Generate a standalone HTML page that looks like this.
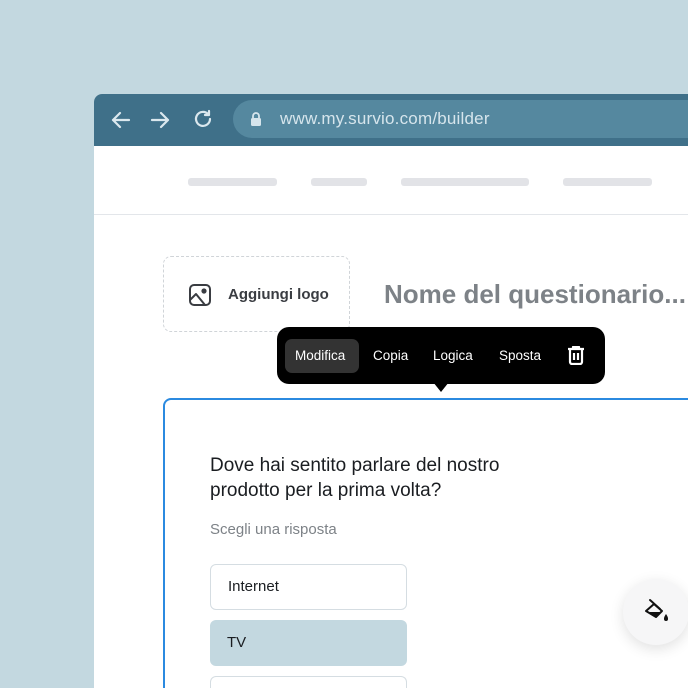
<!DOCTYPE html>
<html style="width:688px;height:688px;overflow:hidden"><head><style>
*{margin:0;padding:0;box-sizing:border-box}
body{width:688px;height:688px;background:#c3d8e0;position:relative;overflow:hidden;font-family:"Liberation Sans",sans-serif}
.win{position:absolute;left:94px;top:94px;width:594px;height:594px;background:#fff;border-radius:8px 0 0 0;overflow:hidden}
.bar{height:52px;background:#3f7089;position:relative}
.url{position:absolute;left:139px;top:6px;width:480px;height:38px;border-radius:19px;background:#55889f;color:#d6e5ec;font-size:17px;line-height:38px;padding-left:47px;letter-spacing:.2px}
.nav{height:69px;border-bottom:1px solid #e3e6ea;position:relative}
.pill{position:absolute;top:32px;height:8px;border-radius:3px;background:#e2e3e7}
.abs{position:absolute}
</style></head><body>
<div class="win">
 <div class="bar">
  <svg class="abs" style="left:16px;top:15px" width="22" height="22" viewBox="0 0 22 22" fill="none" stroke="#dbe8ee" stroke-width="2.2" stroke-linecap="round" stroke-linejoin="round"><path d="M19 11H3M10 4l-7 7 7 7"/></svg>
  <svg class="abs" style="left:55px;top:15px" width="22" height="22" viewBox="0 0 22 22" fill="none" stroke="#dbe8ee" stroke-width="2.2" stroke-linecap="round" stroke-linejoin="round"><path d="M3 11h16M12 4l7 7-7 7"/></svg>
  <svg class="abs" style="left:98px;top:14px" width="22" height="22" viewBox="0 0 22 22" fill="none" stroke="#dbe8ee" stroke-width="2.2" stroke-linecap="round" stroke-linejoin="round"><path d="M18 11a7 7 0 1 1-2-5"/><path d="M17 3v4h-4"/></svg>
  <div class="url">www.my.survio.com/builder</div>
  <svg class="abs" style="left:156px;top:17px" width="12" height="16" viewBox="0 0 12 16"><path d="M3 7V5a3 3 0 0 1 6 0v2" fill="none" stroke="#d6e5ec" stroke-width="1.8"/><rect x="1" y="7" width="10" height="8" rx="1.5" fill="#d6e5ec"/></svg>
 </div>
 <div class="nav">
  <div class="pill" style="left:94px;width:89px"></div>
  <div class="pill" style="left:217px;width:56px"></div>
  <div class="pill" style="left:307px;width:128px"></div>
  <div class="pill" style="left:469px;width:89px"></div>
 </div>
</div>
<div class="abs" style="left:163px;top:256px;width:187px;height:76px;border:1.5px dashed #d0d4d8;border-radius:8px"></div>
<svg class="abs" style="left:188px;top:283px" width="24" height="24" viewBox="0 0 24 24" fill="none" stroke="#3a3d42" stroke-width="2" stroke-linejoin="round"><rect x="2" y="2" width="20" height="20" rx="4"/><path d="M2 17l6-6 9 11"/><circle cx="16" cy="8" r="1.6" fill="#3a3d42"/></svg>
<div class="abs" style="left:228px;top:286px;font-size:15px;color:#3a3d42;font-weight:bold">Aggiungi logo</div>
<div class="abs" style="left:384px;top:279px;font-size:26px;color:#7d8287;font-weight:bold;white-space:nowrap">Nome del questionario...</div>
<div class="abs" style="left:163px;top:398px;width:540px;height:300px;border:2px solid #2b8ae0;border-radius:8px;background:#fff"></div>
<div class="abs" style="left:277px;top:327px;width:328px;height:57px;background:#000;border-radius:12px"></div>
<div class="abs" style="left:433px;top:382px;width:0;height:0;border-left:8px solid transparent;border-right:8px solid transparent;border-top:10px solid #000"></div>
<div class="abs" style="left:285px;top:339px;width:74px;height:34px;background:#333;border-radius:7px"></div>
<div class="abs" style="top:348px;left:0;font-size:13.5px;color:#fff;white-space:nowrap">
 <span class="abs" style="left:295px">Modifica</span><span class="abs" style="left:373px">Copia</span><span class="abs" style="left:433px">Logica</span><span class="abs" style="left:499px">Sposta</span>
</div>
<svg class="abs" style="left:567px;top:346px" width="18" height="19" viewBox="0 0 18 19" fill="none" stroke="#fff" stroke-width="2.2" stroke-linejoin="round"><path d="M1 3h16M6 3V1h6v2M3 3v13a2 2 0 0 0 2 2h8a2 2 0 0 0 2-2V3M7 7v7M11 7v7"/></svg>
<div class="abs" style="left:210px;top:453px;font-size:19px;line-height:25px;color:#1a1d21">Dove hai sentito parlare del nostro<br>prodotto per la prima volta?</div>
<div class="abs" style="left:210px;top:521px;font-size:15px;color:#7d8287">Scegli una risposta</div>
<div class="abs" style="left:210px;top:564px;width:197px;height:46px;border:1px solid #d5dde2;border-radius:6px;font-size:15px;line-height:44px;padding-left:17px;color:#1a1d21">Internet</div>
<div class="abs" style="left:210px;top:620px;width:197px;height:46px;background:#c3d8e0;border-radius:6px;font-size:15px;line-height:46px;padding-left:17px;color:#1a1d21">TV</div>
<div class="abs" style="left:210px;top:676px;width:197px;height:20px;border:1px solid #d5dde2;border-bottom:none;border-radius:6px 6px 0 0"></div>
<div class="abs" style="left:623px;top:579px;width:66px;height:66px;border-radius:50%;background:#f6f6f7;box-shadow:0 4px 14px rgba(0,0,0,.12)"></div>
<svg class="abs" style="left:643px;top:597px" width="28" height="28" viewBox="0 0 28 28"><path d="M7 3l10 9" stroke="#111" stroke-width="2" stroke-linecap="round"/><path d="M3 14l8-7 8 7-6 6z" fill="none" stroke="#111" stroke-width="2" stroke-linejoin="round"/><path d="M4 15h14l-5 5z" fill="#111"/><path d="M23 17c-2 3-2 4-2 5a2 2 0 0 0 4 0c0-1 0-2-2-5z" fill="#111"/></svg>
</body></html>
